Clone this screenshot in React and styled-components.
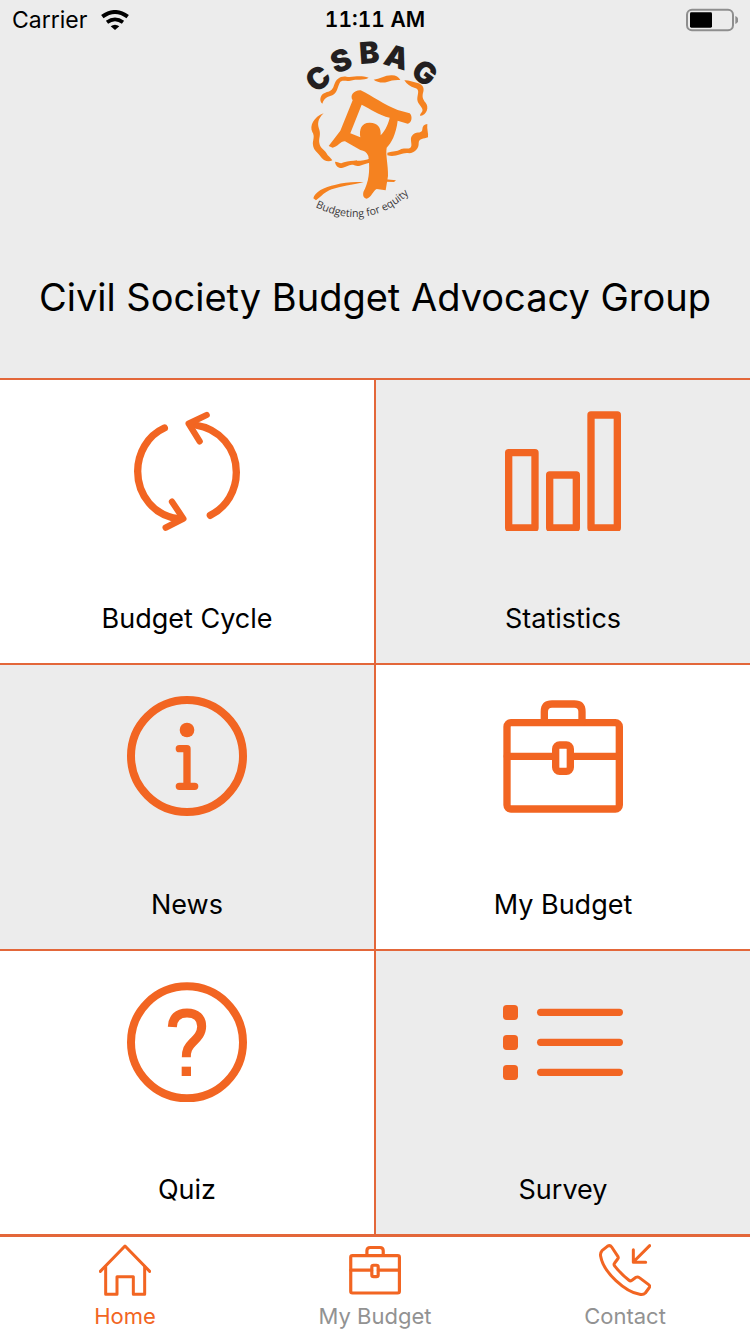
import React from 'react'
import styled, { createGlobalStyle } from 'styled-components'

const GlobalStyle = createGlobalStyle`
  :root {
    --accent: #f26522;
    --line: #e3673a;
    --surface: #ececec;
    --muted: #929292;
  }

  * { box-sizing: border-box; }

  body {
    margin: 0;
    background: #fff;
    color: #000;
    font-family: Inter, "Liberation Sans", sans-serif;
  }
`;

const Screen = styled.div`
  display: flex;
  flex-direction: column;
  min-height: 100vh;
`;

const StatusBar = styled.div`
  display: grid;
  grid-template-columns: 1fr auto 1fr;
  align-items: center;
  height: 40px;
  padding: 0 12px;
  background: var(--surface);
  font-size: 23px;
  line-height: 40px;

  strong {
    font-size: 21px;
    font-weight: 600;
    font-variant-numeric: tabular-nums;
  }
`;

const Carrier = styled.div`
  display: flex;
  align-items: center;
  gap: 14px;
`;

const Battery = styled.svg`
  justify-self: end;
  width: 52px;
  height: 24px;
`;

const Header = styled.header`
  display: flex;
  flex-direction: column;
  align-items: center;
  height: 338px;
  background: var(--surface);

  svg {
    width: 170px;
    height: 190px;
    margin-top: -5px;
    overflow: visible;
  }

  h1 {
    margin: 44px 0 0;
    font-size: 38px;
    font-weight: 400;
    line-height: 56px;
    white-space: nowrap;
  }
`;

const Grid = styled.main`
  flex: 1;
  display: grid;
  grid-template-columns: 1fr 1fr;
  grid-auto-rows: 1fr;
  gap: 2px;
  padding-top: 2px;
  background: var(--line);
`;

const Tile = styled.button`
  display: flex;
  flex-direction: column;
  align-items: center;
  justify-content: space-between;
  padding: 31px 0 26px;
  border: 0;
  background: ${({ $shaded }) => ($shaded ? 'var(--surface)' : '#fff')};
  color: inherit;
  font: inherit;
  font-size: 27px;
  line-height: 36px;
  cursor: pointer;

  svg {
    width: 120px;
    height: 120px;
    color: var(--accent);
  }
`;

const TabBar = styled.nav`
  display: grid;
  grid-template-columns: repeat(3, 1fr);
  height: 100px;
  border-top: 3px solid var(--line);
  background: #fff;
`;

const Tab = styled.a`
  display: flex;
  flex-direction: column;
  align-items: center;
  gap: 7px;
  padding-top: 7px;
  color: ${({ $active }) => ($active ? 'var(--accent)' : 'var(--muted)')};
  font-size: 22px;
  line-height: 26px;
  text-decoration: none;

  svg {
    width: 52px;
    height: 52px;
    color: var(--accent);
  }
`;

const Icon = ({ viewBox, width = 22, children }) => (
  <svg
    viewBox={viewBox}
    fill="none"
    stroke="currentColor"
    strokeWidth={width}
    strokeLinecap="round"
    strokeLinejoin="round"
    aria-hidden="true"
  >
    {children}
  </svg>
)

const CycleIcon = () => (
  <Icon viewBox="51 63 360 360">
    <path d="M163 114C112 137 83 190 83 244C83 316 133 378 206 386" />
    <path d="M186 335L220 386L167 413" strokeWidth="19" />
    <path d="M301 376C350 351 379 302 379 247C379 174 328 116 256 105" />
    <path d="M290 75L236 101L269 154" strokeWidth="19" />
  </Icon>
)

const StatsIcon = () => (
  <Icon viewBox="39 63 360 360">
    <rect x="56" y="188" width="79" height="226" />
    <rect x="179" y="255" width="80" height="159" />
    <rect x="303" y="75" width="79" height="339" />
  </Icon>
)

const InfoIcon = () => (
  <Icon viewBox="51 48 360 360">
    <circle cx="231" cy="228" r="168" strokeWidth="24" />
    <circle cx="231" cy="150" r="22" fill="currentColor" stroke="none" />
    <path d="M208 206H231V319M208 319H254" />
  </Icon>
)

const BriefcaseIcon = () => (
  <Icon viewBox="39 48 360 360">
    <rect x="51" y="128" width="337" height="259" rx="12" />
    <path d="M163 126V95Q163 72 186 72H253Q276 72 276 95V126M52 229H196M242 229H387" />
    <rect x="197" y="195" width="44" height="79" rx="12" />
  </Icon>
)

const QuestionIcon = () => (
  <Icon viewBox="51 36 360 360">
    <circle cx="231" cy="217" r="168" strokeWidth="24" />
    <g strokeLinecap="butt">
      <path d="M187 171C188 143 203 129 231 129C260 129 275 144 275 169C275 190 263 202 248 217C234 231 229 240 229 262" strokeWidth="27" />
      <path d="M215 304H243" strokeWidth="28" />
    </g>
  </Icon>
)

const ListIcon = () => (
  <Icon viewBox="39 -24 360 360">
    {[67, 157, 247].map(y => (
      <g key={y}>
        <rect x="39" y={y - 22} width="45" height="45" rx="11" fill="currentColor" stroke="none" />
        <path d={`M152 ${y}H388`} />
      </g>
    ))}
  </Icon>
)

const HomeIcon = () => (
  <Icon viewBox="294 57 156 156" width={9}>
    <path d="M298 139L372 63L446 139" />
    <path d="M314 125V208H348V155H397V208H431V125" />
  </Icon>
)

const CallIcon = () => (
  <Icon viewBox="114 57 156 156" width={9}>
    <path d="M139 64Q147 59 152 66L171 95Q173 99 170 102L161 114Q157 119 162 124Q181 148 203 165Q209 170 214 165L225 157Q230 154 235 158L262 178Q269 183 264 189L253 204Q247 210 236 208C194 201 127 143 119 94Q117 84 123 77Z" />
    <path d="M266 62L217 111M217 74V112H254" />
  </Icon>
)

const WifiIcon = () => (
  <svg width="28" height="20" viewBox="0 0 84 60" aria-hidden="true">
    <path d="M4 20Q42-8 80 20" fill="none" stroke="#000" strokeWidth="12" />
    <path d="M18 37Q42 19 66 37" fill="none" stroke="#000" strokeWidth="11" />
    <path d="M42 60L29 49Q42 39 55 49Z" />
  </svg>
)

const letters = [
  ['C', 84, 130, -38],
  ['S', 153, 77, -21],
  ['B', 238, 53, -4],
  ['A', 320, 66, 17],
  ['G', 404, 113, 36],
]

const Logo = () => (
  <svg viewBox="0 0 510 570" role="img" aria-label="CSBAG, Budgeting for equity">
    <g fill="#231f20" fontFamily="Inter, sans-serif" fontSize="90" fontWeight="900" textAnchor="middle">
      {letters.map(([letter, x, y, angle]) => (
        <text key={letter} transform={`translate(${x} ${y}) rotate(${angle})`} y="32">{letter}</text>
      ))}
    </g>
    <g fill="#f58220">
      {/* crown of the tree */}
      <path d="M97 206C86 197 91 177 106 173C119 169 127 168 132 151C139 131 150 123 169 125C190 128 207 119 236 128C222 137 199 131 181 137C169 141 155 132 149 144C142 157 142 174 127 181C116 186 103 186 97 206Z" />
      <path d="M251 134C270 132 286 120 306 121C318 121 326 127 331 135C314 134 303 136 291 141C277 145 260 141 251 134Z" />
      <path d="M343 136C356 135 368 142 380 143C396 146 404 157 400 170C396 183 397 192 407 203C417 215 412 239 391 243C388 235 400 233 397 222C393 210 380 204 382 188C385 172 388 163 375 159C360 155 351 148 343 136Z" />
      <path d="M101 235C83 252 82 267 87 281C94 300 85 309 88 324C91 341 103 343 109 354C114 364 122 367 127 376C115 383 99 377 91 364C84 353 70 346 69 330C67 316 76 306 67 291C58 273 71 246 101 235Z" />
      <path d="M412 267C410 283 416 295 414 307C401 313 387 309 386 324C387 342 372 357 352 354C333 353 318 368 292 361V353C310 347 321 350 330 344C344 335 361 347 364 333C366 321 357 309 370 298C383 289 396 297 397 283C397 273 403 268 412 267Z" />
      <path d="M135 380C147 381 151 388 162 382C188 373 214 383 242 370V383C221 384 211 398 193 391C179 385 170 398 154 399C143 399 136 390 135 380Z" />
      {/* frame and figure */}
      <path d="M116 333L151 287L188 196C178 182 192 165 212 166C248 184 282 209 323 225L359 235C369 243 365 266 353 266L323 257C318 298 304 324 290 338C286 361 295 389 294 423L287 466L260 462C250 466 243 489 230 491C218 489 216 474 225 461C240 429 239 392 235 363C230 352 223 347 211 345L165 319C152 318 144 335 128 338ZM215 209L181 295L211 307C207 284 214 262 240 263C263 263 274 278 272 301C288 284 296 263 299 248C267 241 242 222 215 209Z" fillRule="evenodd" />
      <path d="M70 490C74 471 101 456 137 449C162 443 191 439 221 442C186 450 153 453 125 463C105 470 94 484 78 496Z" />
      <path d="M287 433L318 436L312 441L287 440Z" />
    </g>
    <path id="tagline" d="M76 516Q240 596 368 466" fill="none" />
    <text fill="#3c3a3b" fontFamily="Open Sans, sans-serif" fontSize="32" fontWeight="500">
      <textPath href="#tagline">Budgeting for equity</textPath>
    </text>
  </svg>
)

const tiles = [
  { label: 'Budget Cycle', icon: CycleIcon },
  { label: 'Statistics', icon: StatsIcon, shaded: true },
  { label: 'News', icon: InfoIcon, shaded: true },
  { label: 'My Budget', icon: BriefcaseIcon },
  { label: 'Quiz', icon: QuestionIcon },
  { label: 'Survey', icon: ListIcon, shaded: true },
]

const tabs = [
  { label: 'Home', icon: HomeIcon, href: '#home' },
  { label: 'My Budget', icon: BriefcaseIcon, href: '#budget' },
  { label: 'Contact', icon: CallIcon, href: '#contact' },
]

export default function App() {
  return (
    <Screen>
      <GlobalStyle />
      <StatusBar>
        <Carrier>
          <span>Carrier</span>
          <WifiIcon />
        </Carrier>
        <strong>11:11 AM</strong>
        <Battery viewBox="0 0 156 72" aria-hidden="true">
          <rect x="3" y="5" width="138" height="62" rx="15" fill="none" stroke="#8e8e8e" strokeWidth="6" />
          <rect x="12" y="13" width="66" height="46" rx="4" />
          <path d="M148 24Q157 28 157 36Q157 44 148 48Z" fill="#8e8e8e" />
        </Battery>
      </StatusBar>
      <Header>
        <Logo />
        <h1>Civil Society Budget Advocacy Group</h1>
      </Header>
      <Grid>
        {tiles.map(({ label, icon: TileIcon, shaded }) => (
          <Tile key={label} type="button" $shaded={shaded}>
            <TileIcon />
            <span>{label}</span>
          </Tile>
        ))}
      </Grid>
      <TabBar>
        {tabs.map(({ label, icon: TabIcon, href }, index) => (
          <Tab key={label} href={href} $active={index === 0}>
            <TabIcon />
            <span>{label}</span>
          </Tab>
        ))}
      </TabBar>
    </Screen>
  )
}
